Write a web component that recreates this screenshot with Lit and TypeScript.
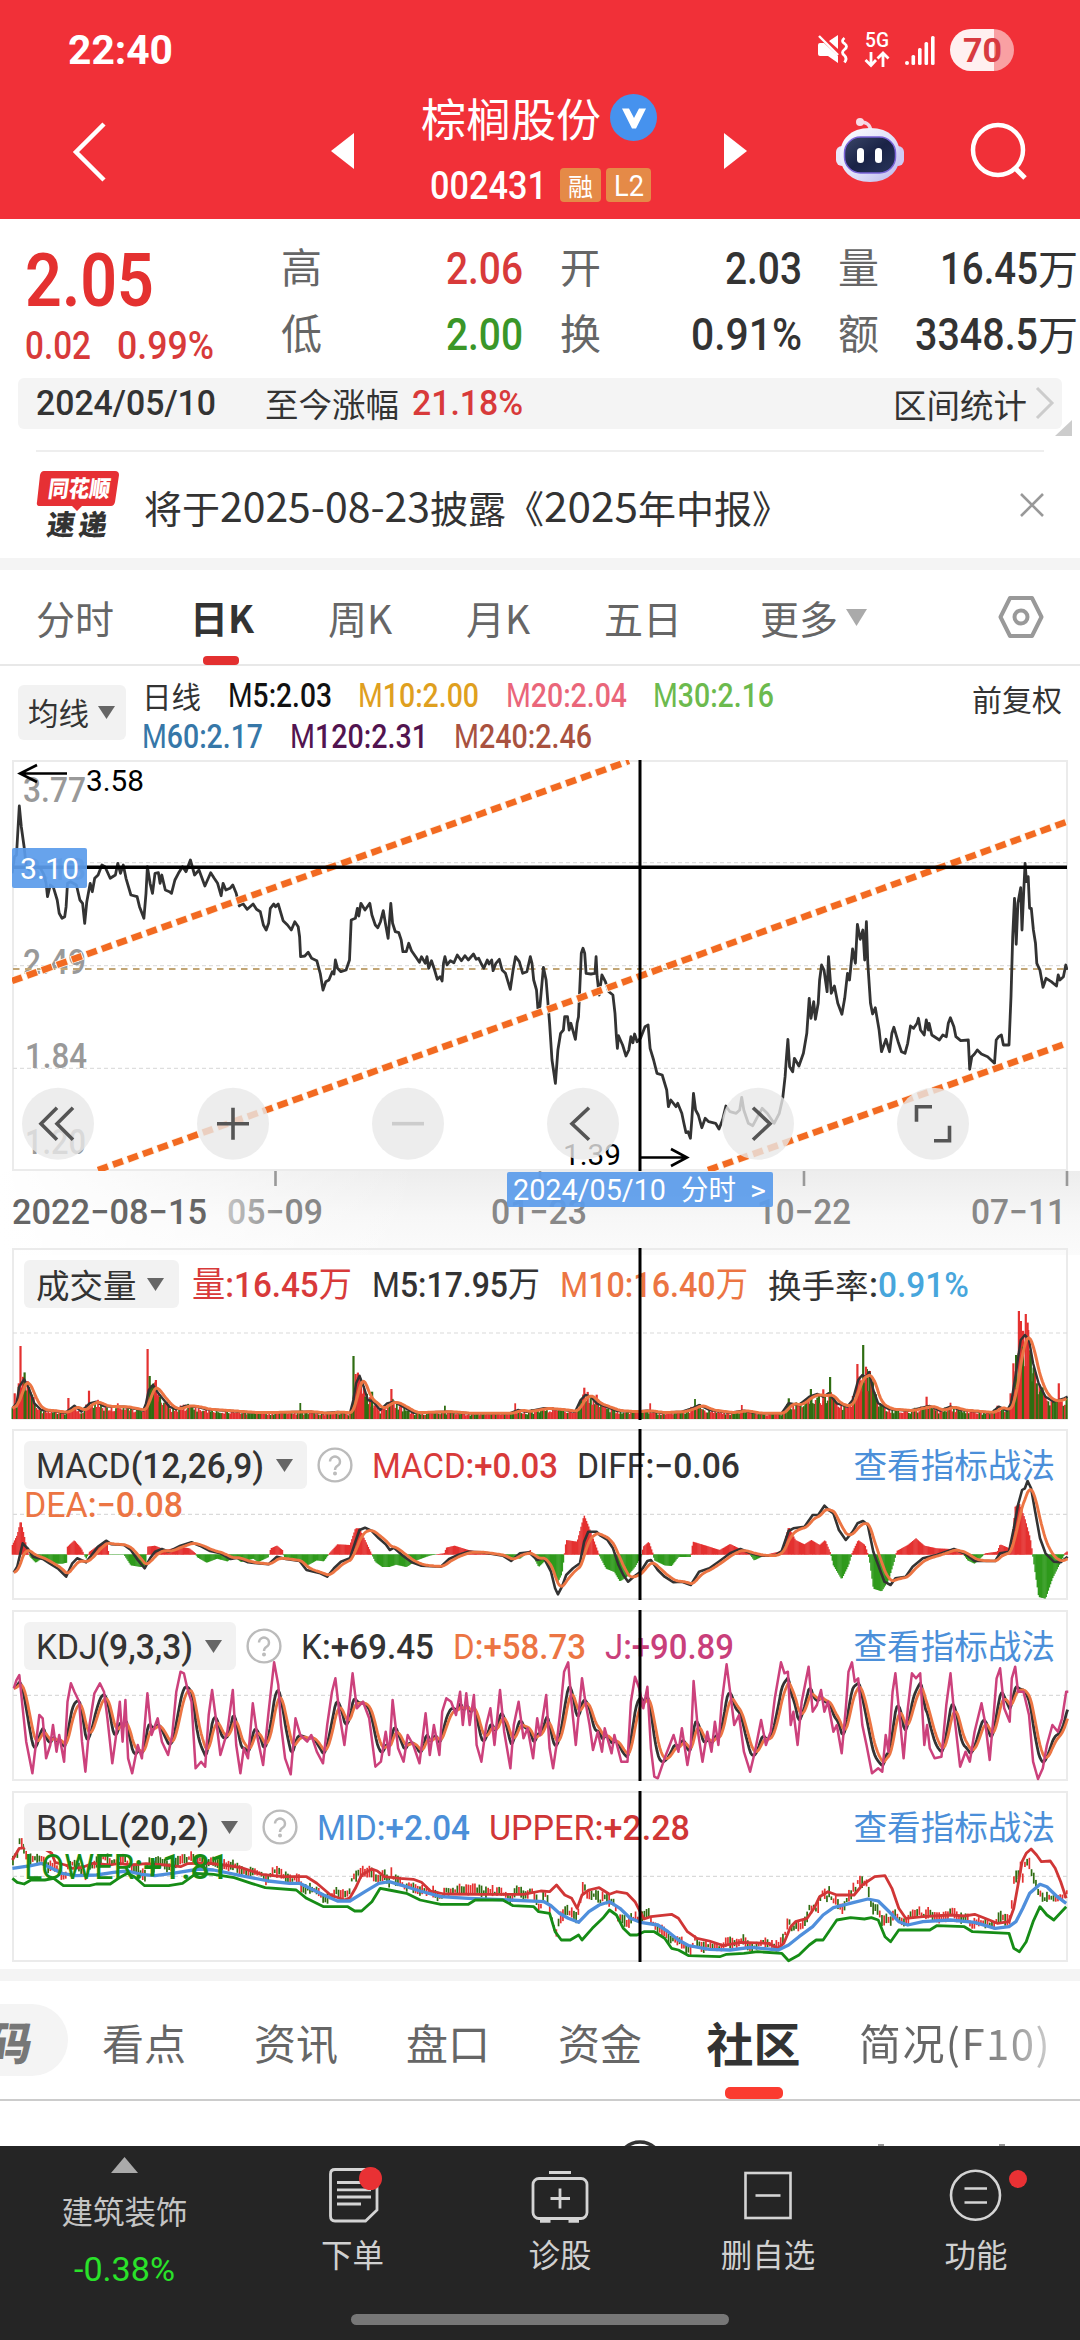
import { LitElement, html, svg, css, nothing } from "lit";
import { customElement } from "lit/decorators.js";

type Pt = [number, number];

/** Parses "x,y x,y ..." into points. */
const pts = (s: string): Pt[] =>
  s.trim().split(/\s+/).map((p) => p.split(",").map(Number) as Pt);

/** Linear interpolation of a polyline at evenly spaced positions. */
function sample(p: Pt[], step: number): Pt[] {
  const out: Pt[] = [];
  let i = 0;
  for (let x = p[0][0]; x <= p[p.length - 1][0]; x += step) {
    while (i < p.length - 2 && p[i + 1][0] < x) i++;
    const [x0, y0] = p[i];
    const [x1, y1] = p[i + 1];
    out.push([x, y0 + ((y1 - y0) * (x - x0)) / (x1 - x0 || 1)]);
  }
  return out;
}

function ema(p: Pt[], alpha: number): Pt[] {
  let v = p[0][1];
  return p.map(([x, y]) => {
    v += alpha * (y - v);
    return [x, v] as Pt;
  });
}

function movingAverage(p: Pt[], n: number): Pt[] {
  return p.map(([x], i) => {
    const w = p.slice(Math.max(0, i - n + 1), i + 1);
    return [x, w.reduce((a, b) => a + b[1], 0) / w.length] as Pt;
  });
}

function noise(seed: number): number {
  const v = Math.sin(seed * 127.1 + 11.7) * 43758.5453;
  return v - Math.floor(v);
}

const KX = 1.4519;
const toPage = (p: Pt[], top: number, kx = KX): Pt[] =>
  p.map(([x, y]) => [x / kx, top + y / 3]);
const join = (p: Pt[]) => p.map(([x, y]) => `${x.toFixed(1)},${y.toFixed(1)}`).join(" ");
const line = (p: Pt[], color: string, w = 2.8) =>
  svg`<polyline points=${join(p)} fill="none" stroke=${color} stroke-width=${w} stroke-linejoin="round" />`;

const PRICE_A = pts(`35,370 42,320 48,315 56,168 62,230 70,290 76,350 85,360 100,350 118,355 128,375 134,400 138,440 146,405 155,412 166,450 172,490 180,505 188,500 192,470 196,400 205,395 222,405 232,450 240,460 246,520 252,455 262,400 268,425 275,385 285,375 296,345 305,350 320,385 335,375 342,340 350,370 358,345 366,385 380,435 398,440 405,470 418,505 424,430 428,350 436,400 443,430 450,370 460,368 465,400 470,375 480,420 492,425 498,430 508,390 518,370 530,350 540,365 553,330 565,375 578,360 595,408 612,368 622,385 632,400 642,437 648,400 656,420 668,415 676,405 686,430 695,468 705,460 718,478 735,462 745,478 756,485 765,525 773,540 780,520 785,475 795,462 800,470 808,462 822,512 835,525 846,540 856,515 866,530 870,560 873,620 885,618 895,607 905,625 920,632 930,670 938,720 946,695 955,690 965,665 970,672 974,630 980,655 990,665 1005,660 1015,630 1020,510 1032,505 1038,475 1042,498 1048,460 1060,480 1074,460 1080,495 1090,525 1097,533 1105,515 1113,482 1120,525 1127,565 1132,500 1135,460 1140,520 1148,545 1158,548 1165,570 1170,605 1180,605 1187,580 1195,602 1210,625 1218,637 1224,620 1235,640 1240,620 1245,655 1253,632 1262,660 1270,688 1278,680 1284,693 1288,640 1292,620 1298,645 1308,632 1318,638 1328,615 1340,632 1350,617 1360,630 1375,612 1383,628 1390,625 1398,642 1405,655 1415,630 1420,642 1428,630 1432,662 1440,640 1450,628 1458,660 1468,670 1482,718 1490,660 1497,620 1508,635 1518,670 1530,665 1540,620 1545,640 1550,690 1558,720 1562,775`);
const PRICE_B = pts(`0,770 10,652 18,690 28,820 35,930 45,1000 52,900 60,850 68,840 72,800 80,800 85,840 90,820 103,868 108,820 112,800 118,660 120,610 125,595 130,610 134,670 148,672 160,670 163,620 166,680 172,735 180,675 190,695 200,725 212,735 218,790 222,860 225,895 228,857 240,885 250,918 258,900 264,860 270,878 275,852 282,875 292,865 305,830 314,825 320,895 330,930 340,970 355,975 368,1020 373,1070 380,1050 395,1070 400,1060 412,1090 418,1120 424,1148 430,1145 437,1165 441,1110 446,1030 452,1080 460,1095 470,1133 480,1105 490,1115 510,1120 520,1137 530,1110 540,1068 552,1085 570,1090 580,1080 586,1042 592,1080 605,1120 618,1127 632,1100 645,1075 660,1090 680,1120 695,1090 705,1045 712,980 716,920 720,868 725,950 734,965 739,925 752,948 765,910 775,850 782,745 787,805 795,755 800,808 808,760 812,690 818,645 825,660 834,725 838,620 846,730 855,708 865,760 877,793 885,745 893,670 899,690 908,597 916,640 922,523 930,568 938,540 943,630 948,515 952,640 960,760 966,792 974,773 985,840 992,905 1005,868 1015,905 1022,850 1028,832 1040,875 1050,905 1060,910 1068,880 1076,828 1085,835 1095,820 1099,805 1105,840 1116,855 1122,810 1128,840 1130,820 1138,855 1160,870 1170,855 1180,860 1186,820 1192,803 1202,830 1208,860 1222,872 1244,870 1248,958 1254,920 1262,912 1270,900 1282,912 1300,920 1320,940 1325,870 1332,860 1340,855 1346,885 1362,885 1368,740 1373,560 1378,445 1383,583 1388,460 1396,413 1400,540 1405,420 1409,340 1413,395 1418,380 1422,475 1427,475 1433,540 1439,580 1443,640 1452,660 1461,712 1470,685 1485,695 1500,708 1505,675 1510,690 1520,680 1527,645 1531,660`).map(([x, y]) => [x + 1568, y] as Pt);
const PRICE = toPage([...PRICE_A, ...PRICE_B], 750, 2.904);

const VOL = pts(`18,505 24,490 28,440 35,418 42,445 50,490 60,510 75,512 95,518 108,497 118,515 130,490 140,485 150,498 165,500 180,500 200,508 208,512 212,490 216,450 222,435 230,460 238,480 246,500 256,508 270,497 285,500 300,508 330,512 370,518 430,516 450,515 470,520 490,516 508,520 513,480 517,430 522,407 528,440 534,480 542,485 552,510 562,490 572,485 585,500 600,518 650,515 680,520 740,520 752,510 765,515 790,505 820,510 835,515 843,480 850,465 858,470 866,490 880,500 895,512 920,515 940,512 960,518 990,515 1005,505 1015,495 1030,510 1060,518 1080,512 1100,520 1135,520 1145,490 1160,495 1175,470 1187,462 1195,470 1203,460 1215,490 1230,500 1238,480 1246,420 1252,405 1257,412 1262,396 1268,450 1275,490 1290,507 1320,512 1350,498 1365,512 1380,500 1395,510 1440,518 1450,500 1462,512 1468,490 1475,400 1482,300 1488,285 1494,300 1500,370 1508,430 1518,470 1530,485 1545,475 1550,470`);
const SPIKES: [number, number, "r" | "g"][] = [
  [21, 460, "r"], [27, 430, "r"], [29.5, 318, "r"], [99, 474, "r"], [129, 452, "r"], [171, 490, "r"],
  [214, 327, "r"], [217, 408, "g"], [226, 420, "r"], [232, 470, "g"], [436, 489, "g"], [513, 348, "g"],
  [516, 402, "r"], [519, 410, "r"], [540, 455, "g"], [568, 447, "r"], [646, 497, "g"], [748, 490, "r"],
  [848, 443, "r"], [866, 464, "r"], [944, 490, "r"], [1009, 477, "g"], [1077, 495, "r"], [1145, 475, "g"],
  [1177, 447, "g"], [1195, 448, "r"], [1205, 411, "g"], [1238, 468, "r"], [1244.5, 372, "r"], [1253, 315, "g"],
  [1257, 380, "r"], [1262, 400, "g"], [1345, 470, "r"], [1380, 488, "r"], [1448, 497, "r"], [1467, 460, "r"],
  [1471, 370, "r"], [1475, 345, "g"], [1479, 213, "r"], [1482, 243, "r"], [1485, 320, "g"], [1489, 222, "r"],
  [1492.5, 270, "r"], [1496, 330, "g"], [1500, 400, "g"], [1505, 430, "g"], [1510, 455, "g"], [1537, 430, "r"],
];

const DIFF = pts(`20,442 25,425 33,355 40,370 48,395 62,402 72,415 85,432 96,455 105,415 112,400 125,412 135,385 142,365 154,347 162,358 180,360 190,375 200,405 210,430 218,400 225,380 235,372 245,380 262,362 278,352 290,362 305,378 320,385 335,402 345,398 360,412 390,418 402,395 415,402 435,408 445,435 465,445 475,455 485,430 495,410 508,400 516,350 522,315 530,308 540,318 550,340 560,358 566,375 572,368 585,392 598,412 612,422 640,425 652,402 665,390 680,380 700,382 730,392 742,408 755,385 768,382 780,405 790,400 800,440 806,490 810,508 816,485 822,450 832,430 842,415 848,350 854,320 866,320 872,332 882,345 890,370 898,420 905,450 912,470 920,455 930,440 940,408 945,405 955,435 965,455 978,472 990,470 1003,480 1015,440 1030,430 1045,408 1060,385 1075,372 1090,385 1105,392 1125,392 1135,378 1145,318 1152,310 1168,305 1180,270 1188,270 1197,242 1205,258 1210,265 1218,315 1228,345 1238,320 1245,295 1253,288 1260,300 1268,380 1275,420 1284,470 1293,480 1300,460 1315,455 1325,425 1340,400 1360,390 1385,372 1400,385 1415,408 1445,408 1452,385 1465,380 1472,310 1478,240 1484,195 1488,190 1492,168 1497,190 1503,260 1510,340 1518,385 1530,410 1540,412 1550,395`);
const HIST = pts(`18,360 25,330 30,285 35,330 40,380 44,395 52,412 60,400 75,415 90,415 97,412 98,365 108,346 118,370 125,400 130,380 138,368 155,350 158,388 180,388 190,420 205,425 212,420 214,365 225,362 240,375 262,365 275,370 284,385 286,395 300,412 315,400 330,408 340,395 350,410 368,400 375,410 390,395 393,370 402,362 410,375 413,402 425,400 435,402 445,422 460,405 470,408 478,385 490,358 508,360 516,310 522,310 530,345 540,388 545,410 555,425 565,425 575,418 590,425 605,405 625,390 645,385 648,368 660,362 680,375 700,382 738,395 755,400 770,375 782,425 792,405 800,430 810,470 816,445 822,345 838,350 848,270 854,300 862,345 870,390 880,430 892,440 900,468 910,455 922,425 932,388 934,365 942,350 948,385 950,405 965,420 975,422 985,395 1003,395 1006,350 1025,362 1045,375 1060,357 1075,372 1088,385 1095,405 1110,390 1135,378 1145,305 1155,345 1168,358 1178,345 1190,360 1198,345 1206,385 1210,420 1222,462 1232,420 1237,385 1246,345 1256,360 1262,400 1268,490 1280,498 1290,465 1298,410 1302,378 1318,360 1330,340 1342,362 1360,370 1380,372 1398,385 1405,405 1415,415 1430,385 1448,380 1452,358 1468,372 1474,245 1480,235 1488,280 1496,340 1500,400 1508,515 1518,520 1528,460 1540,410 1546,385 1550,378`);

const J = pts(`20,790 24,765 28,750 33,850 38,950 47,1045 52,960 57,870 62,880 67,1000 73,960 77,900 82,980 86,930 93,1010 98,830 103,775 108,800 115,830 119,950 124,1040 130,900 137,805 145,775 151,800 156,880 163,1015 168,940 174,830 178,950 182,825 186,1000 192,1045 200,960 206,1000 214,805 220,930 229,880 235,950 244,990 250,930 256,800 262,740 267,745 272,790 278,830 284,1030 292,1010 298,1025 303,870 308,795 314,890 320,990 330,920 338,795 343,960 349,1045 354,970 360,1000 367,835 374,940 382,1020 390,860 398,712 404,780 408,900 414,1000 422,1048 429,880 436,930 446,950 452,930 460,980 469,1015 475,900 482,800 487,760 493,870 500,960 506,860 512,745 518,850 527,830 536,880 545,1025 553,1010 560,920 565,990 570,825 578,970 586,1010 592,930 600,960 609,1015 618,865 624,990 630,900 638,990 642,860 648,820 655,830 662,870 668,800 672,900 677,805 682,900 688,810 692,960 699,1010 706,900 712,850 718,960 726,795 732,920 741,1030 746,900 753,830 760,940 766,910 774,1000 780,880 784,930 793,810 798,970 803,1030 808,960 814,850 819,740 825,712 830,840 836,960 841,850 845,760 850,830 856,900 861,975 868,920 874,980 878,910 888,985 892,930 902,1010 911,1010 916,830 922,755 928,790 934,850 940,785 945,970 950,1055 955,1060 965,1000 978,930 985,980 990,910 998,1020 1003,960 1007,768 1014,930 1020,1010 1027,920 1033,980 1038,890 1043,960 1048,830 1055,718 1060,800 1066,900 1073,870 1080,980 1089,1040 1096,980 1105,885 1112,960 1119,920 1125,820 1134,712 1139,745 1144,740 1148,900 1152,860 1158,960 1164,830 1174,725 1180,860 1186,840 1192,795 1197,860 1202,830 1210,920 1215,900 1222,985 1228,850 1232,740 1237,712 1241,770 1246,760 1252,900 1258,960 1266,1045 1275,1030 1281,1040 1286,930 1290,980 1296,800 1300,745 1306,870 1312,1000 1318,850 1324,745 1330,760 1336,745 1342,960 1346,900 1350,970 1357,1000 1367,995 1374,840 1380,745 1386,880 1394,1025 1402,980 1408,1010 1415,920 1425,835 1431,900 1437,1005 1443,860 1447,760 1452,730 1458,850 1466,890 1469,760 1474,725 1478,800 1486,800 1494,870 1500,1010 1507,1062 1514,1030 1520,960 1528,900 1536,920 1542,880 1548,800 1551,800`);

const UPPER = pts(`18,225 28,190 40,188 65,192 75,205 80,232 95,240 105,250 118,248 135,235 160,240 172,235 190,240 212,236 240,240 262,245 272,236 300,234 325,240 350,248 380,268 410,275 445,275 460,295 480,330 500,345 508,338 516,310 525,270 540,252 548,258 558,275 580,280 600,283 612,292 625,318 645,327 700,328 760,328 785,318 798,320 808,300 820,330 830,340 838,370 845,330 855,315 870,308 885,328 895,320 910,325 922,350 935,402 945,395 975,388 985,400 998,440 1012,460 1030,468 1050,482 1075,472 1115,475 1130,490 1138,475 1148,425 1155,410 1172,400 1182,370 1190,335 1202,320 1215,330 1240,330 1252,300 1270,275 1285,272 1295,310 1305,370 1315,400 1340,395 1380,390 1400,393 1415,388 1430,400 1448,415 1465,410 1472,370 1478,300 1484,230 1490,205 1497,192 1505,210 1512,230 1525,228 1532,250 1540,290 1548,340`);
const MID = pts(`18,250 45,242 60,235 75,250 90,265 110,272 140,270 165,262 185,258 205,268 225,272 250,265 290,252 310,255 350,272 390,288 420,295 435,295 450,310 470,330 490,348 508,348 530,320 550,295 565,290 590,305 610,318 640,335 680,340 740,345 790,350 800,362 812,385 825,400 840,412 855,380 870,360 885,350 900,370 915,400 930,412 955,420 970,440 985,465 1000,482 1030,493 1060,495 1090,487 1130,495 1145,480 1160,455 1180,425 1195,390 1210,368 1240,352 1260,342 1275,348 1290,378 1305,410 1318,420 1340,410 1380,405 1415,412 1445,430 1465,425 1475,410 1485,370 1495,325 1510,298 1520,305 1535,335 1548,355`);
const LOWER = pts(`18,280 25,292 35,297 45,285 65,285 78,280 92,302 130,302 140,297 160,297 172,280 185,265 195,275 210,302 245,302 265,295 285,265 310,268 340,278 365,295 385,308 430,315 445,340 470,365 505,365 515,378 525,378 540,350 552,310 565,315 590,325 610,345 640,358 680,358 690,345 730,345 745,362 775,365 782,380 798,385 806,440 815,465 828,465 840,450 845,465 860,430 875,400 885,375 895,390 905,430 915,450 925,450 935,440 950,440 965,460 975,490 985,495 1000,512 1045,515 1055,508 1080,505 1100,500 1135,505 1145,527 1160,510 1175,480 1185,465 1195,465 1215,405 1235,398 1255,402 1265,398 1275,405 1285,455 1293,470 1305,435 1350,435 1360,422 1400,425 1412,440 1465,445 1472,490 1480,500 1490,470 1500,410 1510,365 1520,390 1530,405 1548,365`);

/** Letters are drawn lighter than figures, as in the quote typeface. */
const runs = (t: string) => t.split(/([A-Z一-龥]+)/).filter(Boolean);
const runBody = (t: string) =>
  runs(t).map((r) =>
    /[A-Z]/.test(r) ? svg`<tspan class="lt">${r}</tspan>`
      : /[一-龥]/.test(r) ? svg`<tspan class="cj">${r}</tspan>` : svg`<tspan>${r}</tspan>`);

/** Condensed text of a fixed advance width, centred on its capital height. */
const fit = (t: string, w: number, size: number, color: string, cls = "num") => html`<svg
  class="fit ${cls}" width=${w} height=${size}><text x="0" y=${size * 0.855} font-size=${size}
  fill=${color} textLength=${w} lengthAdjust="spacingAndGlyphs">${runBody(t)}</text></svg>`;

/** Condensed text at a place on a chart; y is the baseline. */
const label = (t: string, x: number, y: number, w: number, size: number, color: string, cls = "num") =>
  svg`<text class=${cls} x=${x} y=${y} font-size=${size} fill=${color} textLength=${w}
    lengthAdjust="spacingAndGlyphs">${t}</text>`;

const caret = (color = "#666") => html`<svg class="caret" width="17" height="13"><path d="M0 0H17L8.5 13Z" fill=${color} /></svg>`;
const help = html`<svg class="help" width="36" height="36" viewBox="0 0 36 36" fill="none" stroke="#bbb" stroke-width="2.4"><circle cx="18" cy="18" r="16.4" /><path d="M13 14.5a5 5 0 1 1 7.6 4.3c-1.8 1.1-2.6 2-2.6 4.2" /><circle cx="18" cy="26.6" r=".8" fill="#bbb" /></svg>`;

const frame = (top: number, bottom: number, mid: number) => svg`
  <rect x="13" y=${top} width="1054" height=${bottom - top} fill="none" stroke="#ebebeb" stroke-width="2" />
  <path d="M13 ${mid}H1067" stroke="#dadada" stroke-width="1.2" stroke-dasharray="4 3" />`;
const cursor = (top: number, bottom: number) =>
  svg`<path d="M640 ${top}V${bottom}" stroke="#000" stroke-width="3" />`;

const RED = "#e43130";
const GREEN = "#2f9a1c";

function volumeChart() {
  const s = sample(VOL, 2.18);
  const base = s.map(([x, y], i) => {
    const h = (537 - y) * (0.6 + 0.6 * noise(i));
    return { x, h, up: noise(i + 900) > 0.46 };
  });
  const bars = [...base, ...SPIKES.map(([x, y, c]) => ({ x, h: 537 - y, up: c === "r" }))];
  return svg`
    ${bars.map((b) => svg`<rect x=${(b.x / KX - 0.9).toFixed(1)} y=${(1419 - b.h / 3).toFixed(1)}
      width=${b.h > 60 ? 2.2 : 1.8} height=${(b.h / 3).toFixed(1)} fill=${b.up ? RED : "#2f6d12"} />`)}
    ${line(toPage(VOL, 1240), "#333", 2.4)}
    ${line(toPage(movingAverage(s, 6), 1240), "#ec7543", 3)}`;
}

function macdChart() {
  return svg`
    ${sample(HIST, 1.6).map(([x, y]) => svg`<rect x=${(x / KX - 0.7).toFixed(1)}
      y=${(1425 + Math.min(y, 388) / 3).toFixed(1)} width="1.5" height=${(Math.abs(y - 388) / 3 + 0.4).toFixed(1)}
      fill=${y < 388 ? RED : GREEN} />`)}
    ${line(toPage(DIFF, 1425), "#333", 2.6)}
    ${line(toPage(ema(sample(DIFF, 2), 0.24), 1425), "#ec7543", 2.9)}`;
}

function kdjChart() {
  const k = ema(sample(J, 2), 0.2);
  const d = ema(k, 0.32);
  return svg`${line(toPage(k, 1425), "#333", 2.8)}${line(toPage(d, 1425), "#ec7543", 2.8)}${line(toPage(J, 1425), "#cc417c", 2.5)}`;
}

function bollChart() {
  const candles = sample(PRICE, 2.2).map(([x, y], i) => {
    const c = 1857 + (y - 863) * 0.345;
    const h = 3 + 9 * noise(i * 3);
    return svg`<rect x=${x.toFixed(1)} y=${(c - h / 2).toFixed(1)} width="1.7" height=${h.toFixed(1)}
      fill=${noise(i + 70) > 0.48 ? RED : "#2f6d12"} />`;
  });
  return svg`${candles}
    ${line(toPage(UPPER, 1785), "#d03636")}
    ${line(toPage(MID, 1785), "#4f8fdc", 3.3)}
    ${line(toPage(LOWER, 1785), "#168c16")}`;
}

const BLUE = "#4b8fd9";
const link = html`<span class="link">查看指标战法</span>`;

@customElement("app-root")
export class AppRoot extends LitElement {
  static styles = css`
    :host { display: flex; flex-direction: column; width: 1080px; height: 2340px; overflow: hidden; background: #fff;
      font-family: Roboto, "Noto Sans CJK SC", sans-serif; color: #333; line-height: 1; }
    * { box-sizing: border-box; }
    svg { display: block; flex: none; overflow: visible; }
    text { white-space: pre; }
    .num { font-family: Roboto, "Noto Sans CJK SC", sans-serif; font-weight: 470; }
    .lt, .cj, .reg { font-weight: 400; }
    .semi { font-weight: 560; }
    .bold { font-weight: 700; }
    .han { font-family: "Noto Sans CJK SC", sans-serif; white-space: nowrap; }
    .row { display: flex; align-items: center; }

    .head { height: 219px; background: #f13038; color: #fff; flex: none; }
    .status { height: 100px; padding: 0 66px 0 68px; justify-content: space-between; }
    .sys { gap: 15px; }
    .battery { width: 64px; height: 42px; border-radius: 21px; justify-content: center;
      background: linear-gradient(90deg, #fff0f0 44px, #f9a0a3 44px); }
    .bar { height: 101px; display: grid; grid-template-columns: 330px 91px 303px 111px 133px 1fr; grid-template-rows: 101px; align-items: center; }
    .back { padding-left: 70px; }
    .title { align-self: start; margin-top: -6px; }
    .name { font-size: 45px; gap: 9px; height: 46px; }
    .code { gap: 5px; height: 36px; margin-top: 27px; padding-left: 9px; }
    .tag { height: 34px; border-radius: 4px; background: #e58a47; display: flex; align-items: center; justify-content: center; font-size: 25px; width: 41px; margin-left: 8px; }
    .tag + .tag { width: 45px; margin-left: 0; }

    .quote { height: 159px; display: grid; grid-template-columns: 281px 242px 37px 242px 36px 240px; flex: none; }
    .last { padding: 23px 0 0 25px; display: flex; flex-direction: column; gap: 7px; }
    .last svg + svg { margin-left: 26px; }
    .last .row { height: 42px; }
    .kv { padding-top: 16px; }
    .kv .row { height: 66px; justify-content: space-between; }
    .k { font-size: 41px; color: #666; margin-bottom: 5px; }
    .wide { display: flex; align-items: center; font-size: 40px; }
    .wide .han { margin-bottom: 3px; }

    .range { width: 1044px; margin-left: 18px; height: 51px; border-radius: 6px; background: #f4f4f4; padding: 0 8px 2px 18px; font-size: 33.5px; flex: none; }
    .range .since { margin: 0 13px 0 49px; }
    .range .stat { margin-left: auto; margin-right: 8px; padding-top: 2px; }
    .corner { height: 22px; flex: none; display: flex; justify-content: flex-end; padding-right: 8px; margin-top: -9px; }
    .corner + .notice { margin-top: 8px; }
    .notice { height: 108px; margin: 0 36px; border-top: 2px solid #eee; flex: none; font-size: 38px; }
    .notice .msg { margin-left: 24px; padding-top: 4px; display: flex; align-items: center; color: #333; }
    .notice .msg svg { margin-top: 1px; }
    .notice .x { margin-left: auto; }
    .band { height: 12px; background: #f4f4f4; flex: none; }

    .tabs { height: 96px; border-bottom: 2px solid #e8e8e8; padding: 0 36px; flex: none; font-size: 39px; color: #666; }
    .p1 { width: 156px; }
    .p3 { margin-left: 76px; width: 138px; }
    .p4 { width: 138px; }
    .p5 { width: 156px; }
    .hex { margin-left: auto; }
    .tabs .caret { margin-left: 8px; }
    .tabs .on { color: #333; font-weight: 700; display: grid; width: 60px; height: 96px; align-items: center; justify-items: center; }
    .tabs .on .han, .tabs .on i { grid-area: 1 / 1; }
    .tabs .on i { width: 36px; height: 9px; border-radius: 4px; background: #e33030; align-self: end; margin-bottom: 0; margin-right: 2px; }
    .tabs .on .han { margin: 0 -4px 0 -4px; font-size: 38px; }

    .ma { height: 89px; padding: 0 18px 0 18px; display: flex; flex: none; }
    .drop { display: flex; align-items: center; gap: 9px; background: #f2f2f2; border-radius: 6px; }
    .ma .drop { width: 108px; height: 55px; margin-top: 19px; padding-left: 10px; font-size: 30.5px; }
    .lines { margin-left: 16px; }
    .lines .row { gap: 26.5px; height: 41px; font-size: 29.5px; }
    .lines .row:first-child { margin-top: 9px; }
    .adj { margin-left: auto; margin-top: 17px; font-size: 30px; }

    .panel { display: grid; flex: none; grid-template-columns: 1080px; }
    .panel > * { grid-area: 1 / 1; }
    .legend { display: flex; align-items: center; gap: 19px; height: 48px; margin: 16px 24px 0 24px; font-size: 33.5px; }
    .legend .drop { height: 48px; padding: 0 14px 0 12px; gap: 12px; }
    .legend .drop + svg.help { margin-left: -9px; }
    .legend .vol { gap: 0; }
    .legend .link { color: #4b8fd9; font-family: "Noto Sans CJK SC", sans-serif; margin: 0 1px 2px auto; font-size: 33.6px; }
    .volume .legend { margin-top: 15px; gap: 20px; }
    .volume .legend .drop { width: 155px; margin-right: -7px; padding: 0 0 0 12px; gap: 10px; }
    .second { padding: 62px 0 0 24px; }

    .pages { height: 120px; border-bottom: 2px solid #ccc; flex: none; font-size: 42px; color: #666; display: grid;
      grid-template-columns: 102px 152px 152px 152px 147px 154px 1fr; align-items: center; }
    .pages > * { padding-top: 4px; }
    .pages .pill { width: 68px; height: 72px; background: #f4f4f4; border-radius: 0 36px 36px 0; overflow: hidden; padding: 0; display: flex; align-items: center; }
    .pages .pill b { font-size: 45px; font-weight: 900; margin-left: -12px; transform: skewX(-8deg); color: #777; }
    .pages .on { color: #333; font-weight: 700; font-size: 47px; display: grid; height: 118px; align-items: center; justify-items: center; width: 97px; padding: 0; }
    .pages .on > * { grid-area: 1 / 1; }
    .pages .on span { padding-top: 2px; }
    .pages .on i { width: 58px; height: 12px; border-radius: 5px; background: #fb3b30; align-self: end; }
    .fade { background: linear-gradient(90deg, #666 50%, #999 78%, #ddd 100%); -webkit-background-clip: text; color: transparent; width: 200px; line-height: 1.3; letter-spacing: 1.4px; white-space: nowrap; font-family: "Noto Sans CJK SC", sans-serif; }
    .peek { height: 45px; flex: none; overflow: hidden; }

    .nav { height: 194px; background: #252525; flex: none; color: #d0d0d0; font-size: 31.5px; display: grid; grid-template-columns: 249px 207px 208px 208px 208px; grid-template-rows: 162px 1fr; }
    .item { display: flex; flex-direction: column; align-items: center; padding-top: 16px; gap: 10px; }
    .sector { padding-top: 11px; gap: 0; color: #c4c4c4; }
    .sector .han { margin: 22px 0 26px; }
    .home { grid-column: 1 / -1; width: 378px; height: 11px; border-radius: 6px; background: #777; margin: 6px auto 0; }
  `;

  private header() {
    return html`<div class="head">
      <div class="status row">
        ${fit("22:40", 105, 40, "#fff", "num bold")}
        <div class="sys row">
          <svg width="32" height="32" viewBox="0 0 32 32" fill="#fff"><path d="M1 11Q1 9 3 9H7L21 22V29L11 22H3Q1 22 1 20ZM12 7L21 1V15Z" /><path d="M2 2L21 21" stroke="#fff" stroke-width="2.4" /><path d="M28.500 3q-4 3 0 5.500q4 3 0 6q-4 3 0 6q3 3 0 7" transform="translate(-1 1)" fill="none" stroke="#fff" stroke-width="2.800" /></svg>
          <svg width="26" height="34" viewBox="0 0 26 34" fill="none" stroke="#fff" stroke-width="2.800"><text class="num" x="1" y="14" font-size="20" textLength="24" lengthAdjust="spacingAndGlyphs" fill="#fff" stroke="none">5G</text><path d="M7 19V32M1.500 27L7 32.500L12 27M19 34V20.500M13.500 25.500L19 20L24.500 25.500" /></svg>
          <svg width="30" height="30" viewBox="0 0 30 30" fill="#fff"><circle cx="2" cy="28" r="2" /><rect x="6.500" y="20" width="3.600" height="10" rx="1.500" /><rect x="13" y="13" width="3.600" height="17" rx="1.500" /><rect x="19.500" y="7" width="3.600" height="23" rx="1.500" /><rect x="26" y="1" width="3.600" height="29" rx="1.500" /></svg>
          <div class="battery row">${fit("70", 39, 34, "#d83a40", "num bold")}</div>
        </div>
      </div>
      <div class="bar">
        <svg class="back" width="110" height="64" viewBox="0 0 40 64" fill="none" stroke="#fff" stroke-width="4.500"><path d="M34 5L6 33L34 61" /></svg>
        <svg width="24" height="36"><path d="M24 0V36L1 18Z" fill="#fff" /></svg>
        <div class="title">
          <div class="name row han">棕榈股份<svg width="47" height="47" viewBox="0 0 47 47"><circle cx="23.500" cy="23.500" r="23.500" fill="#4692ee" /><path d="M12 14.500H19L24 24L29 14.500H36L26 34.500H22Z" fill="#fff" /></svg></div>
          <div class="code row">${fit("002431", 117, 38, "#fff")}<span class="tag han">融</span><span class="tag">${fit("L2", 30, 29, "#fff", "reg")}</span></div>
        </div>
        <svg width="24" height="36"><path d="M0 0V36L23 18Z" fill="#fff" /></svg>
        <svg width="70" height="68" viewBox="0 0 70 68">
          <defs><linearGradient id="sh" x1="0" y1="0" x2="1" y2="1"><stop offset="0" stop-color="#fff" /><stop offset=".6" stop-color="#dcdcf8" /><stop offset="1" stop-color="#b9b4ea" /></linearGradient>
          <linearGradient id="sc" x1="0" y1="0" x2="1" y2="1"><stop offset="0" stop-color="#3a4668" /><stop offset=".5" stop-color="#1a2346" /><stop offset="1" stop-color="#28355a" /></linearGradient></defs>
          <path d="M24 5Q35 4 36 15" fill="none" stroke="#f3d6e4" stroke-width="3.500" /><circle cx="25" cy="5" r="4" fill="#f8dce6" />
          <rect x="1" y="29" width="12" height="20" rx="6" fill="#e9e6fa" /><rect x="57" y="29" width="12" height="20" rx="6" fill="#cfcaf3" />
          <path d="M35 11C55 11 65 23 65 38S54 65 35 65S5 53 5 38S15 11 35 11Z" fill="url(#sh)" />
          <rect x="9.500" y="20" width="51" height="36" rx="16" fill="url(#sc)" stroke="#7a63d8" stroke-width="1.500" />
          <rect x="22" y="31" width="7" height="15" rx="3.500" fill="#fff" /><rect x="40" y="31" width="7" height="15" rx="3.500" fill="#fff" />
        </svg>
        <svg width="60" height="60" viewBox="0 0 60 60" fill="none" stroke="#fff" stroke-width="4.500"><circle cx="30" cy="29" r="25" /><path d="M47 47L57 57" stroke-width="5" /></svg>
      </div>
    </div>`;
  }

  private quote() {
    const D = "#333";
    const R = "#d83a3a";
    return html`<div class="quote">
        <div class="last">${fit("2.05", 129, 75, RED, "num semi")}<div class="row">${fit("0.02", 66, 38.5, R)}${fit("0.99%", 97, 38.5, R)}</div></div>
        <div class="kv"><div class="row"><span class="k han">高</span>${fit("2.06", 77, 45, R)}</div><div class="row"><span class="k han">低</span>${fit("2.00", 77, 45, "#3a9628")}</div></div>
        <span></span>
        <div class="kv"><div class="row"><span class="k han">开</span>${fit("2.03", 77, 45, D)}</div><div class="row"><span class="k han">换</span>${fit("0.91%", 111, 45, D)}</div></div>
        <span></span>
        <div class="kv"><div class="row"><span class="k han">量</span><span class="wide">${fit("16.45", 98, 45, D)}<span class="han">万</span></span></div><div class="row"><span class="k han">额</span><span class="wide">${fit("3348.5", 123, 45, D)}<span class="han">万</span></span></div></div>
      </div>
      <div class="range row">${fit("2024/05/10", 180, 35.5, D)}<span class="since han">至今涨幅</span>${fit("21.18%", 111, 35.5, R)}
        <span class="stat han">区间统计</span><svg width="19" height="34" fill="none" stroke="#ccc" stroke-width="3"><path d="M2 2L17 17L2 32" /></svg></div>
      <div class="corner"><svg width="17" height="16"><path d="M17 0V16H0Z" fill="#ccc" /></svg></div>
      <div class="notice row">
        <svg width="84" height="70" viewBox="0 0 84 70">
          <path d="M8 1H79Q83 1 83 5L79 32Q78 36 75 36H46L41 41L36 36H4Q0 36 1 32L4 5Q5 1 8 1Z" fill="#e63034" />
          <g transform="skewX(-8)"><text x="15" y="27" class="han" font-size="23" font-weight="900" fill="#fff" textLength="62" lengthAdjust="spacingAndGlyphs">同花顺</text>
          <text x="19" y="65" class="han" font-size="28" font-weight="900" fill="#333" textLength="60">速递</text></g>
        </svg>
        <span class="msg han">将于${fit("2025-08-23", 210, 41, "#333", "reg")}披露《${fit("2025", 94, 41, "#333", "reg")}年中报》</span>
        <svg class="x" width="24" height="24" fill="none" stroke="#999" stroke-width="2.600"><path d="M1 1L23 23M23 1L1 23" /></svg>
      </div>
      <div class="band"></div>`;
  }

  private periods() {
    return html`<div class="tabs row">
        <span class="p1 han">分时</span>
        <span class="on"><span class="han">日K</span><i></i></span>
        <span class="p3 han">周K</span><span class="p4 han">月K</span><span class="p5 han">五日</span>
        <span class="han">更多</span><svg class="caret" width="21" height="17"><path d="M0 0H21L10.500 17Z" fill="#aaa" /></svg>
        <svg class="hex" width="46" height="42" viewBox="0 0 46 42" fill="none" stroke="#999" stroke-width="4"><path d="M12 2H34L43.500 21L34 40H12L2.500 21Z" stroke-linejoin="round" /><circle cx="23" cy="21" r="6.500" /></svg>
      </div>
      <div class="ma">
        <div class="drop han">均线${caret()}</div>
        <div class="lines">
          <div class="row"><span class="han">日线</span>${fit("M5:2.03", 104, 32.5, "#111")}${fit("M10:2.00", 121, 32.5, "#dfa01f")}${fit("M20:2.04", 121, 32.5, "#ea667a")}${fit("M30:2.16", 121, 32.5, "#6cba4e")}</div>
          <div class="row">${fit("M60:2.17", 121, 32.5, "#3677a8")}${fit("M120:2.31", 138, 32.5, "#521450")}${fit("M240:2.46", 138, 32.5, "#a9523f")}</div>
        </div>
        <span class="adj han">前复权</span>
      </div>`;
  }

  private mainChart() {
    const disc = (x: number, body: unknown) => svg`<g transform="translate(${x} 1123.700)">
      <circle r="36" fill="#e8e8e8" fill-opacity=".8" /><g fill="none" stroke="#555" stroke-width="3.600">${body}</g></g>`;
    const trend = (d: string) => svg`<path d=${d} fill="none" stroke="#fff3e6" stroke-width="8" stroke-dasharray="12.500 3.400" stroke-dashoffset="1" />
      <path d=${d} fill="none" stroke="#f26a21" stroke-width="6.500" stroke-dasharray="10.500 5.400" />`;
    return html`<svg width="1080" height="490" viewBox="0 755 1080 490">
      <defs><linearGradient id="ax" x1="0" y1="0" x2="0" y2="1"><stop offset="0" stop-color="#ededed" /><stop offset=".55" stop-color="#f7f7f7" /><stop offset="1" stop-color="#fbfbfb" /></linearGradient>
        <linearGradient id="axl" x1="0" x2="1" y1="0" y2="0"><stop offset="0" stop-color="#fff" /><stop offset="1" stop-color="#fff" stop-opacity="0" /></linearGradient>
        <linearGradient id="dl" x1="0" x2="1" y1="0" y2="0"><stop offset="0" stop-color="#c4c4c4" /><stop offset=".6" stop-color="#888" /></linearGradient>
        <clipPath id="cp"><rect x="12" y="760" width="1056" height="411" /></clipPath></defs>
      <rect x="0" y="1171" width="1080" height="84" fill="url(#ax)" /><rect x="0" y="1171" width="420" height="84" fill="url(#axl)" />
      <rect x="13" y="761" width="1054" height="409" fill="#fff" stroke="#ebebeb" stroke-width="2" />
      <g stroke="#dedede" stroke-width="1.200" stroke-dasharray="4 3"><path d="M13 862.700H1067M13 965.700H1067M13 1068.300H1067" /></g>
      ${label("3.77", 23, 802, 63, 35, "#999")}${label("2.49", 23, 974, 63, 35, "#999")}${label("1.84", 25, 1068, 62, 35, "#999")}${label("1.20", 25, 1154, 61, 35, "#999")}
      ${label("3.13", 23, 880, 63, 32, "#999")}
      <path d="M13 969H1067" stroke="#c2a676" stroke-width="1.800" stroke-dasharray="6.500 5.500" />
      <g clip-path="url(#cp)">${line(PRICE, "#333", 2.8)}
        ${trend("M12 981L629 761")}${trend("M98 1170L540 1012.300L1067 821.700")}${trend("M708 1170L1067 1043.300")}</g>
      <path d="M67 773.500H20M37 765L20 773.500L37 782" fill="none" stroke="#000" stroke-width="2.600" />
      ${label("3.58", 86, 791, 58, 29.5, "#000", "reg")}
      ${label("1.39", 563, 1165, 58, 29.5, "#000", "reg")}
      <path d="M640 1157.500H687M671 1149L687 1157.500L671 1166" fill="none" stroke="#000" stroke-width="2.600" />
      <path d="M13 867.200H1067" stroke="#000" stroke-width="3.600" />${cursor(760, 1171)}
      <rect x="12" y="848" width="75" height="40" rx="2" fill="#5b9ceb" fill-opacity=".93" />${label("3.10", 20, 879, 59, 30, "#fff", "reg")}
      ${disc(58, svg`<path d="M-1 -16L-17 0L-1 16M15 -16L-1 0L15 16" />`)}
      ${disc(233, svg`<path d="M-16 0H16M0 -16V16" />`)}
      ${disc(408, svg`<path d="M-16 0H16" stroke="#ccc" />`)}
      ${disc(583, svg`<path d="M6 -16L-11 0L6 16" />`)}
      ${disc(758, svg`<path d="M-5 -16L12 0L-5 16" />`)}
      ${disc(933, svg`<path d="M-16.500 -2V-17H-1M16.500 2V17H1" />`)}
      <path d="M275.500 1171V1186M540 1171V1186M804 1171V1186M1067 1171V1186" stroke="#999" stroke-width="2.600" />
      ${label("2022−08−15", 12, 1224, 195, 35, "#666")}${label("05−09", 227, 1224, 96, 35, "url(#dl)")}
      ${label("01−23", 491, 1224, 96, 35, "#888")}${label("10−22", 757, 1224, 94, 35, "#888")}${label("07−11", 971, 1224, 95, 35, "#888")}
      <rect x="507" y="1172" width="266" height="35" rx="2" fill="#5b9ceb" fill-opacity=".93" />
      ${label("2024/05/10", 513, 1200, 153, 30, "#fff", "reg")}${label("分时", 681, 1200, 55, 28, "#fff", "han")}${label(">", 750, 1200, 16, 28, "#fff", "reg")}
    </svg>`;
  }

  private panel(o: { cls?: string; top: number; h: number; frame: [number, number, number]; chart: unknown; legend: unknown; second?: unknown }) {
    const [a, b, m] = o.frame;
    return html`<div class="panel ${o.cls ?? ""}">
      <svg width="1080" height=${o.h} viewBox="0 ${o.top} 1080 ${o.h}">${frame(a, b, m)}${o.chart}</svg>
      <div class="legend">${o.legend}</div>
      ${o.second ? html`<div class="second">${o.second}</div>` : nothing}
      <svg width="1080" height=${o.h} viewBox="0 ${o.top} 1080 ${o.h}">${cursor(a - 1, b + 1)}</svg>
    </div>`;
  }

  private indicators() {
    const OR = "#ec7543";
    const D = "#333";
    return html`
      ${this.panel({ cls: "volume", top: 1245, h: 180, frame: [1249, 1419, 1333], chart: volumeChart(), legend: html`
        <div class="drop han">成交量${caret()}</div>${fit("量:16.45万", 160, 35, "#d83a3a")}${fit("M5:17.95万", 168, 35, D)}${fit("M10:16.40万", 188, 35, OR)}
        <span class="row vol"><span class="han">换手率</span>${fit(":", 9, 35, D)}${fit("0.91%", 91, 35, "#47a6dc")}</span>` })}
      ${this.panel({ top: 1425, h: 181, frame: [1430, 1599, 1514.3], chart: macdChart(), legend: html`
        <div class="drop">${fit("MACD(12,26,9)", 228, 35, D)}${caret()}</div>${help}${fit("MACD:+0.03", 186, 35, "#d83a3a")}${fit("DIFF:−0.06", 163, 35, D)}${link}`,
        second: fit("DEA:−0.08", 159, 35, OR) })}
      ${this.panel({ top: 1606, h: 181, frame: [1611, 1780, 1695.3], chart: kdjChart(), legend: html`
        <div class="drop">${fit("KDJ(9,3,3)", 157, 35, D)}${caret()}</div>${help}${fit("K:+69.45", 133, 35, D)}${fit("D:+58.73", 133, 35, OR)}${fit("J:+90.89", 129, 35, "#c93f7b")}${link}` })}
      ${this.panel({ top: 1787, h: 182, frame: [1792, 1961, 1876.3], chart: bollChart(), legend: html`
        <div class="drop">${fit("BOLL(20,2)", 173, 35, D)}${caret()}</div>${help}${fit("MID:+2.04", 153, 35, BLUE)}${fit("UPPER:+2.28", 201, 35, "#d03636")}${link}`,
        second: fit("LOWER:+1.81", 205, 35, "#168c16") })}
      <div class="band"></div>`;
  }

  private footer() {
    const s = "#d4d4d4";
    return html`<div class="pages han">
        <div class="pill"><b>码</b></div><span>看点</span><span>资讯</span><span>盘口</span><span>资金</span>
        <span class="on"><span>社区</span><i></i></span><span class="fade">简况(F10)</span>
      </div>
      <div class="peek"><svg width="1080" height="45" fill="none"><circle cx="640" cy="63" r="22" stroke="#333" stroke-width="3.500" /><path d="M878 44h6M999 44h6" stroke="#999" stroke-width="2" /></svg></div>
      <div class="nav">
        <div class="item sector"><svg width="27" height="16"><path d="M13.500 0L27 16H0Z" fill="#aaa" /></svg><span class="han">建筑装饰</span>${fit("-0.38%", 101, 33, "#2ae22a", "reg")}</div>
        <div class="item"><svg width="62" height="66" viewBox="321 2162 62 66" fill="none" stroke=${s} stroke-width="2.800"><path d="M334 2169.500H371Q376 2169.500 376 2174V2210L364.500 2221H334Q329.500 2221 329.500 2216V2174Q329.500 2169.500 334 2169.500ZM336 2182.500H370M336 2189.800H370M336 2197H370M336 2204H360" /><circle cx="369.500" cy="2178.500" r="11.500" fill="#e93134" stroke="none" /></svg><span class="han">下单</span></div>
        <div class="item"><svg width="62" height="66" viewBox="528.500 2162 62 66" fill="none" stroke=${s} stroke-width="2.800"><rect x="532.500" y="2178.500" width="54" height="40" rx="6" /><path d="M548.500 2172.500H570.500M550 2198.500H569.500M559.500 2188.500V2208.500" /><path d="M539.500 2220.800H550M568 2220.800H578.500" stroke-width="4" /></svg><span class="han">诊股</span></div>
        <div class="item"><svg width="62" height="66" viewBox="736.500 2162 62 66" fill="none" stroke=${s} stroke-width="2.600"><rect x="745" y="2173" width="45" height="45" /><path d="M755 2195.500H780" /></svg><span class="han">删自选</span></div>
        <div class="item"><svg width="62" height="66" viewBox="945 2162 62 66" fill="none" stroke=${s} stroke-width="2.600"><circle cx="975.500" cy="2195.300" r="24.500" /><path d="M964.500 2188.500H987M964.500 2202.500H987" /><circle cx="1018" cy="2179" r="9" fill="#e93134" stroke="none" /></svg><span class="han">功能</span></div>
        <div class="home"></div>
      </div>`;
  }

  render() {
    return html`${this.header()}${this.quote()}${this.periods()}${this.mainChart()}${this.indicators()}${this.footer()}`;
  }
}
